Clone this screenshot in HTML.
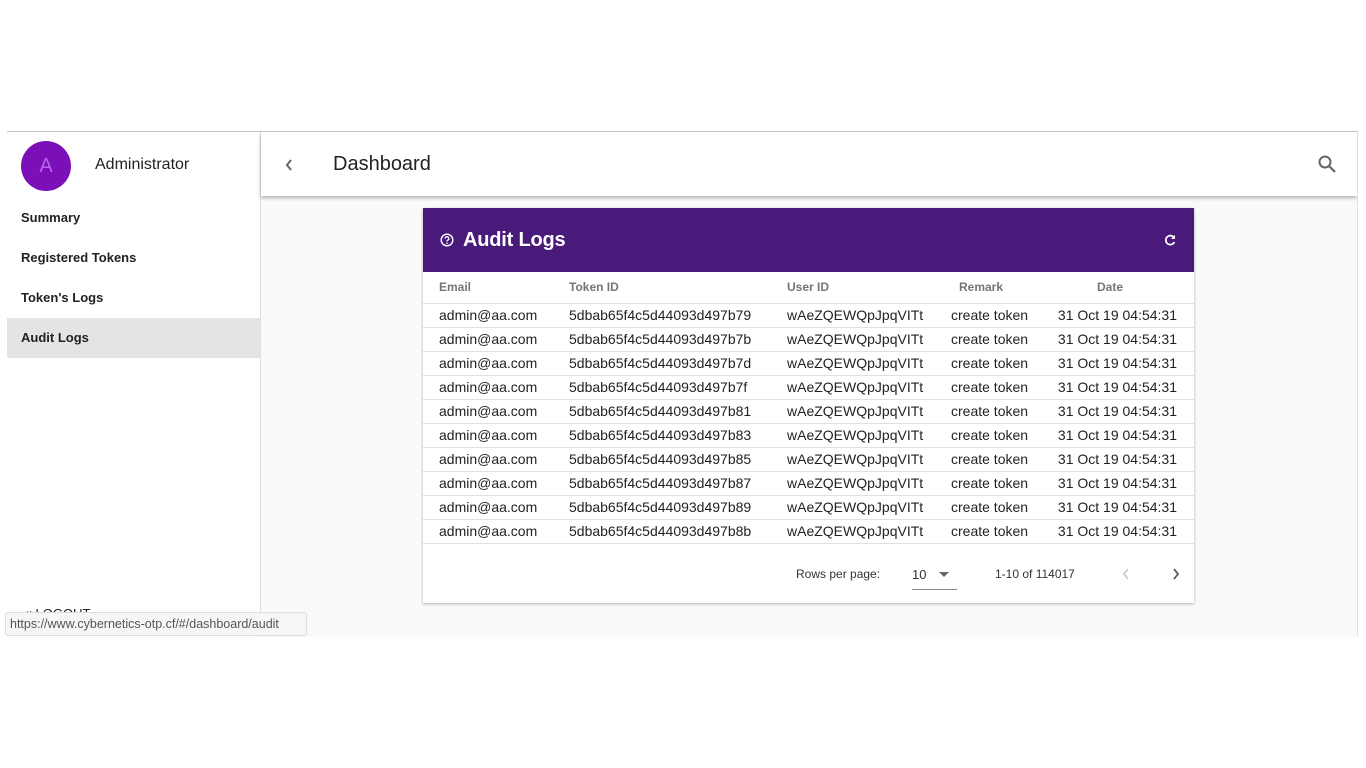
<!DOCTYPE html>
<html><head><meta charset="utf-8"><style>
*{box-sizing:border-box;margin:0;padding:0}
body{width:1366px;height:768px;background:#fff;font-family:"Liberation Sans",Roboto,sans-serif;position:relative;overflow:hidden;color:#212121}
.frame{position:absolute;left:7px;top:131px;width:1351px;height:506px;border-top:1px solid #c4c4c4;border-right:1px solid #e0e0e0;overflow:hidden}
.side{position:absolute;left:0;top:0;width:254px;height:506px;background:#fff;border-right:1px solid #e0e0e0}
.av{position:absolute;left:14px;top:9px;width:50px;height:50px;border-radius:50%;background:#7b0fb8;color:#b565e8;font-size:20px;text-align:center;line-height:50px}
.admin{position:absolute;left:88px;top:24px;font-size:16px;color:#222}
.nav{position:absolute;left:0;width:253px;height:40px;font-size:13px;font-weight:bold;color:#222;padding-left:14px;line-height:40px}
.main{position:absolute;left:254px;top:0;right:0;height:506px;background:#fafafa}
.top{position:absolute;left:0;top:0;right:0;height:64px;background:#fff;box-shadow:0 2px 4px rgba(0,0,0,.3)}
.dash{position:absolute;left:72px;top:21px;font-size:20px;color:#222}
.card{position:absolute;left:162px;top:76px;width:771px;height:395px;background:#fff;box-shadow:0 1px 3px rgba(0,0,0,.3)}
.ch{height:64px;background:#4a1a7a;color:#fff;position:relative}
.ch .t{position:absolute;left:40px;top:21px;font-size:20px;font-weight:bold;letter-spacing:-.2px}
table{border-collapse:collapse;width:100%;font-size:14px}
th{font-size:12px;color:#757575;text-align:left;height:31px;font-weight:bold;border-bottom:1px solid #e0e0e0}
td{height:24px;border-bottom:1px solid #e0e0e0;color:#222;line-height:22px;vertical-align:top}
.c1{padding-left:16px;width:146px}.c2{width:218px}.c3{width:164px}.c4{width:100px}
td.d{text-align:right;padding-right:17px}
.foot{position:absolute;top:335px;left:0;right:0;height:60px;font-size:12px;color:#333}
.status{position:absolute;left:5px;top:612px;width:302px;height:24px;background:#f6f6f6;border:1px solid #ddd;border-radius:3px;font-size:12.5px;color:#555;padding:4px 0 0 4px}
</style></head><body>
<div class="frame">
<div class="side">
<div class="av">A</div><div class="admin">Administrator</div>
<div class="nav" style="top:66px">Summary</div>
<div class="nav" style="top:106px">Registered Tokens</div>
<div class="nav" style="top:146px">Token's Logs</div>
<div class="nav" style="top:186px;background:#e4e4e4">Audit Logs</div>
<div class="nav" style="top:462px;font-weight:normal">⇥ LOGOUT</div>
</div>
<div class="main">
<div class="top">
<svg style="position:absolute;left:22px;top:25px" width="12" height="16" viewBox="0 0 12 16"><path d="M8 3L4 8l4 5" stroke="#666" stroke-width="2" fill="none"/></svg>
<div class="dash">Dashboard</div>
<svg style="position:absolute;right:20px;top:22px" width="20" height="20" viewBox="0 0 20 20"><circle cx="8" cy="8" r="5.5" stroke="#666" stroke-width="2" fill="none"/><path d="M12 12l6 6" stroke="#666" stroke-width="2.2"/></svg>
</div>
<div class="card">
<div class="ch">
<svg style="position:absolute;left:17px;top:25px" width="14" height="14" viewBox="0 0 14 14"><circle cx="7" cy="7" r="5.8" stroke="#fff" stroke-width="1.4" fill="none"/><path d="M5.2 5.6a1.8 1.8 0 1 1 2.6 1.5c-.6.3-.8.7-.8 1.3" stroke="#fff" stroke-width="1.3" fill="none"/><circle cx="7" cy="10.2" r=".8" fill="#fff"/></svg>
<div class="t">Audit Logs</div>
<svg style="position:absolute;left:740px;top:25px" width="14" height="14" viewBox="0 0 14 14"><path d="M11 4.5A4.5 4.5 0 1 0 11.4 9" stroke="#fff" stroke-width="1.7" fill="none"/><path d="M12 2v4H8z" fill="#fff"/></svg>
</div>
<table>
<tr><th class="c1">Email</th><th class="c2">Token ID</th><th class="c3">User ID</th><th class="c4" style="padding-left:8px">Remark</th><th style="padding-left:46px">Date</th></tr>
<tr><td class="c1">admin@aa.com</td><td>5dbab65f4c5d44093d497b79</td><td>wAeZQEWQpJpqVITt</td><td>create token</td><td class="d">31 Oct 19 04:54:31</td></tr>
<tr><td class="c1">admin@aa.com</td><td>5dbab65f4c5d44093d497b7b</td><td>wAeZQEWQpJpqVITt</td><td>create token</td><td class="d">31 Oct 19 04:54:31</td></tr>
<tr><td class="c1">admin@aa.com</td><td>5dbab65f4c5d44093d497b7d</td><td>wAeZQEWQpJpqVITt</td><td>create token</td><td class="d">31 Oct 19 04:54:31</td></tr>
<tr><td class="c1">admin@aa.com</td><td>5dbab65f4c5d44093d497b7f</td><td>wAeZQEWQpJpqVITt</td><td>create token</td><td class="d">31 Oct 19 04:54:31</td></tr>
<tr><td class="c1">admin@aa.com</td><td>5dbab65f4c5d44093d497b81</td><td>wAeZQEWQpJpqVITt</td><td>create token</td><td class="d">31 Oct 19 04:54:31</td></tr>
<tr><td class="c1">admin@aa.com</td><td>5dbab65f4c5d44093d497b83</td><td>wAeZQEWQpJpqVITt</td><td>create token</td><td class="d">31 Oct 19 04:54:31</td></tr>
<tr><td class="c1">admin@aa.com</td><td>5dbab65f4c5d44093d497b85</td><td>wAeZQEWQpJpqVITt</td><td>create token</td><td class="d">31 Oct 19 04:54:31</td></tr>
<tr><td class="c1">admin@aa.com</td><td>5dbab65f4c5d44093d497b87</td><td>wAeZQEWQpJpqVITt</td><td>create token</td><td class="d">31 Oct 19 04:54:31</td></tr>
<tr><td class="c1">admin@aa.com</td><td>5dbab65f4c5d44093d497b89</td><td>wAeZQEWQpJpqVITt</td><td>create token</td><td class="d">31 Oct 19 04:54:31</td></tr>
<tr><td class="c1">admin@aa.com</td><td>5dbab65f4c5d44093d497b8b</td><td>wAeZQEWQpJpqVITt</td><td>create token</td><td class="d">31 Oct 19 04:54:31</td></tr>
</table>
<div class="foot">
<span style="position:absolute;left:373px;top:24px">Rows per page:</span>
<span style="position:absolute;left:489px;top:24px;font-size:13px">10</span>
<svg style="position:absolute;left:516px;top:29px" width="10" height="5"><path d="M0 0h10L5 5z" fill="#666"/></svg>
<div style="position:absolute;left:489px;top:46px;width:45px;border-top:1px solid #888"></div>
<span style="position:absolute;left:572px;top:24px">1-10 of 114017</span>
<svg style="position:absolute;left:698px;top:24px" width="10" height="14"><path d="M7 2L3 7l4 5" stroke="#ccc" stroke-width="1.8" fill="none"/></svg>
<svg style="position:absolute;left:748px;top:24px" width="10" height="14"><path d="M3 2l4 5-4 5" stroke="#555" stroke-width="1.8" fill="none"/></svg>
</div>
</div>
</div>
</div>
<div class="status">https://www.cybernetics-otp.cf/#/dashboard/audit</div>
</body></html>
